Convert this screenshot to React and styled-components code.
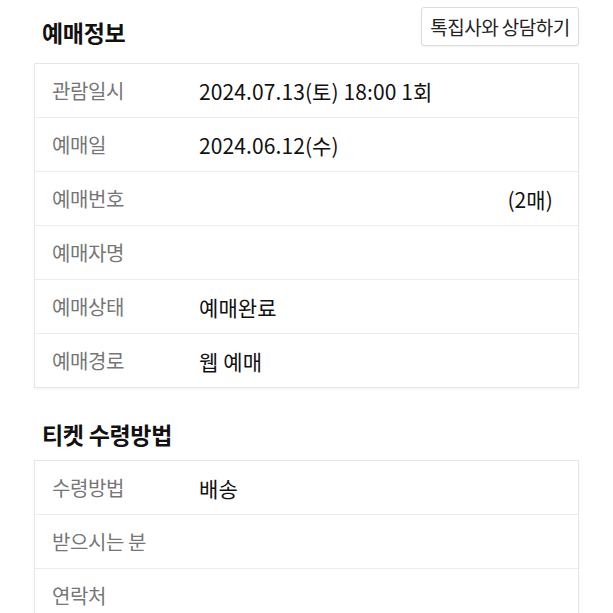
import React from 'react';
import styled, { createGlobalStyle } from 'styled-components';

const GlobalStyle = createGlobalStyle`
    html, body {
        margin: 0;
        padding: 0;
        background: #ffffff;
    }
    body {
        font-family: 'Noto Sans CJK KR', 'Noto Sans', sans-serif;
        color: #111111;
    }
`;

const Page = styled.div`
    padding: 7px 34px 0 34px;
    display: flex;
    flex-direction: column;
`;

const SectionHead = styled.div`
    display: flex;
    align-items: flex-start;
    justify-content: space-between;
    height: ${props => props.height}px;
    margin-top: ${props => props.top || 0}px;
`;

const SectionTitle = styled.h2`
    margin: 0;
    padding-left: 8px;
    padding-top: ${props => props.offset || 0}px;
    font-size: 23px;
    line-height: 34px;
    font-weight: 700;
    letter-spacing: -0.3px;
    color: #111111;
`;

const ChatButton = styled.button`
    font-family: inherit;
    font-size: 19px;
    color: #222222;
    background: #ffffff;
    border: 1px solid #dcdcdc;
    border-radius: 3px;
    height: 39px;
    width: 158px;
    padding: 0;
    letter-spacing: -0.5px;
    box-shadow: 0 1px 2px rgba(0, 0, 0, 0.05);
`;

const Card = styled.div`
    border: 1px solid #e6e6e6;
    box-shadow: 0 1px 2px rgba(0, 0, 0, 0.05);
    display: flex;
    flex-direction: column;
`;

const Row = styled.div`
    display: grid;
    grid-template-columns: 147px 1fr;
    align-items: center;
    height: 53px;
    padding: 0 25px 0 17px;
    border-top: ${props => (props.first ? 'none' : '1px solid #ececec')};
`;

const Label = styled.div`
    font-size: 20px;
    color: #767676;
    letter-spacing: -0.4px;
`;

const Value = styled.div`
    font-size: 21px;
    color: #111111;
    letter-spacing: 0.1px;
    text-align: ${props => (props.right ? 'right' : 'left')};
`;

const reservation = [
    ['관람일시', '2024.07.13(토) 18:00 1회'],
    ['예매일', '2024.06.12(수)'],
    ['예매번호', '(2매)', true],
    ['예매자명', ''],
    ['예매상태', '예매완료'],
    ['예매경로', '웹 예매']
];

const delivery = [
    ['수령방법', '배송'],
    ['받으시는 분', ''],
    ['연락처', '']
];

const InfoCard = ({ rows }) => (
    <Card>
        {rows.map(([label, value, right], i) => (
            <Row key={label} first={i === 0}>
                <Label>{label}</Label>
                <Value right={right}>{value}</Value>
            </Row>
        ))}
    </Card>
);

const App = () => (
    <>
        <GlobalStyle />
        <Page>
            <SectionHead height={56}>
                <SectionTitle offset={8}>예매정보</SectionTitle>
                <ChatButton>톡집사와 상담하기</ChatButton>
            </SectionHead>
            <InfoCard rows={reservation} />
            <SectionHead height={52} top={20}>
                <SectionTitle offset={9}>티켓 수령방법</SectionTitle>
            </SectionHead>
            <InfoCard rows={delivery} />
        </Page>
    </>
);

export default App;
